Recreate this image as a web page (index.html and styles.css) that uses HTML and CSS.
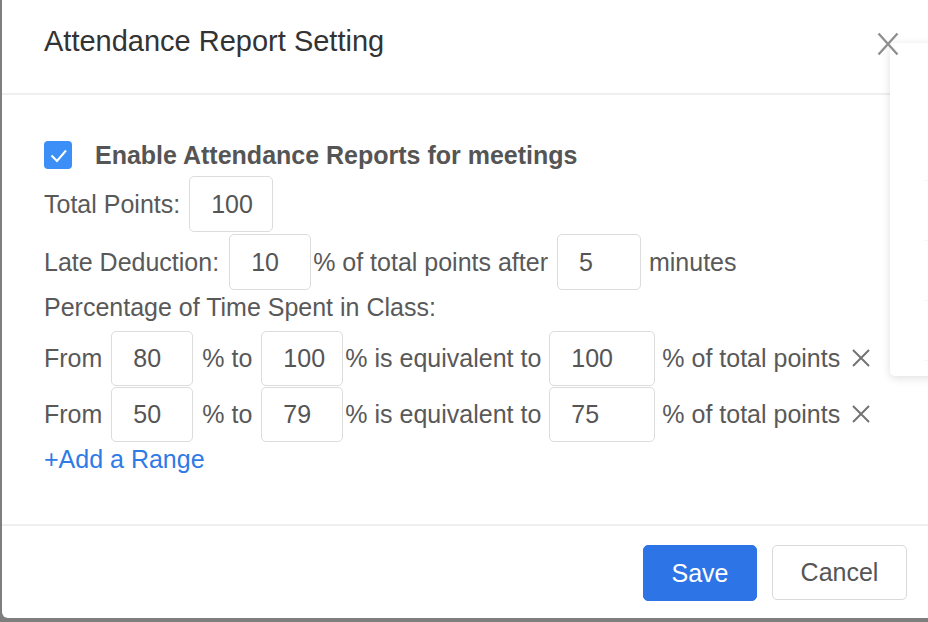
FILE: index.html
```html
<!DOCTYPE html>
<html lang="en">
<head>
<meta charset="utf-8">
<title>Attendance Report Setting</title>
<link rel="stylesheet" href="styles.css">
</head>
<body>
<div class="dialog">
  <div class="header">
    <div class="title">Attendance Report Setting</div>
    <button class="close" aria-label="Close">
      <svg width="22" height="24" viewBox="0 0 22 24"><path d="M1.5 1.5 L20.5 22.5 M20.5 1.5 L1.5 22.5" stroke="#8e8e8e" stroke-width="2.3" fill="none"/></svg>
    </button>
  </div>
  <div class="body">
    <div class="row check-row">
      <span class="checkbox"><svg width="28" height="28" viewBox="0 0 28 28"><polyline points="7.5,14.5 13,20 22,9.5" fill="none" stroke="#fff" stroke-width="2"/></svg></span>
      <span class="bold">Enable Attendance Reports for meetings</span>
    </div>
    <div class="row r-total">
      <span>Total Points:</span>
      <span class="field w84 ml9">100</span>
    </div>
    <div class="row r-late">
      <span>Late Deduction:</span>
      <span class="field w82 ml10 mr2">10</span>
      <span>% of total points after</span>
      <span class="field w84 ml9 mr8">5</span>
      <span>minutes</span>
    </div>
    <div class="row r-pct">
      <span>Percentage of Time Spent in Class:</span>
    </div>
    <div class="row r-from first">
      <span>From</span>
      <span class="field w82 ml9 mr9">80</span>
      <span>% to</span>
      <span class="field w82 ml9 mr2">100</span>
      <span>% is equivalent to</span>
      <span class="field w106 ml8 mr7">100</span>
      <span>% of total points</span>
      <svg class="del" width="18" height="18" viewBox="0 0 18 18"><path d="M1 1 L17 17 M17 1 L1 17" stroke="#737373" stroke-width="2" fill="none"/></svg>
    </div>
    <div class="row r-from">
      <span>From</span>
      <span class="field w82 ml9 mr9">50</span>
      <span>% to</span>
      <span class="field w82 ml9 mr2">79</span>
      <span>% is equivalent to</span>
      <span class="field w106 ml8 mr7">75</span>
      <span>% of total points</span>
      <svg class="del" width="18" height="18" viewBox="0 0 18 18"><path d="M1 1 L17 17 M17 1 L1 17" stroke="#737373" stroke-width="2" fill="none"/></svg>
    </div>
    <div class="row r-add"><a class="add">+Add a Range</a></div>
  </div>
  <div class="footer">
    <button class="btn primary">Save</button>
    <button class="btn">Cancel</button>
  </div>
</div>
<div class="side-panel">
  <div class="side-item"></div>
  <div class="side-item"></div>
  <div class="side-item"></div>
  <div class="side-item"></div>
</div>
</body>
</html>
```
FILE: styles.css
```css
html, body {
  margin: 0;
  padding: 0;
}
body {
  background: #7e7e7e;
  width: 928px;
  height: 622px;
  overflow: hidden;
  font-family: "Liberation Sans", Arial, Helvetica, sans-serif;
  position: relative;
}
.dialog {
  margin-left: 2px;
  width: 926px;
  height: 618px;
  background: #fff;
  border-bottom-left-radius: 6px;
  display: flex;
  flex-direction: column;
}
.header {
  height: 93px;
  border-bottom: 2px solid #efefef;
  display: flex;
  justify-content: space-between;
  align-items: flex-start;
  padding: 0 29px 0 42px;
  box-sizing: content-box;
  flex: none;
}
.title {
  margin-top: 24px;
  font-size: 29px;
  line-height: 34px;
  color: #333;
}
.close {
  position: relative;
  z-index: 3;
  margin-top: 32px;
  padding: 0;
  border: 0;
  background: transparent;
  width: 22px;
  height: 24px;
  display: block;
}
.close svg { display: block; }
.body {
  flex: 1;
  padding: 46px 0 0 42px;
  font-size: 25px;
  line-height: 28px;
  color: #595959;
}
.row {
  display: flex;
  align-items: center;
  white-space: nowrap;
}
.check-row { height: 28px; }
.checkbox {
  width: 28px;
  height: 28px;
  border-radius: 4px;
  background: #3b8ff6;
  margin-right: 23px;
  display: block;
}
.checkbox svg { display: block; }
.bold {
  font-weight: bold;
  color: #555;
}
.r-total { height: 56px; margin-top: 7px; }
.r-late { height: 56px; margin-top: 2px; }
.r-pct { height: 28px; margin-top: 3px; }
.r-from { height: 56px; }
.r-from.first { margin-top: 9px; }
.r-add { height: 28px; margin-top: 3px; }
.field {
  box-sizing: border-box;
  height: 56px;
  border: 1px solid #dcdcdc;
  border-radius: 5px;
  padding-left: 21px;
  display: flex;
  align-items: center;
  color: #555;
}
.r-from .field { height: 55px; }
.w82 { width: 82px; }
.w84 { width: 84px; }
.w106 { width: 106px; }
.ml8 { margin-left: 8px; }
.ml9 { margin-left: 9px; }
.ml10 { margin-left: 10px; }
.mr2 { margin-right: 2px; }
.mr7 { margin-right: 7px; }
.mr8 { margin-right: 8px; }
.mr9 { margin-right: 9px; }
.del {
  margin-left: 12px;
  display: block;
}
.add {
  color: #2f7be6;
  cursor: pointer;
}
.footer {
  flex: none;
  height: 94px;
  border-top: 2px solid #efefef;
  display: flex;
  justify-content: flex-end;
  align-items: flex-start;
  padding: 19px 21px 0 0;
  box-sizing: border-box;
  gap: 15px;
}
.btn {
  height: 55px;
  width: 135px;
  border: 1px solid #d9d9d9;
  border-radius: 5px;
  background: #fff;
  color: #555;
  font-family: "Liberation Sans", Arial, sans-serif;
  font-size: 25px;
  padding: 0;
}
.btn.primary {
  width: 114px;
  height: 56px;
  background: #2d74e7;
  border-color: #2d74e7;
  color: #fff;
}
.side-panel {
  position: absolute;
  left: 890px;
  top: 43px;
  width: 60px;
  height: 333px;
  background: #fff;
  border-radius: 5px;
  box-shadow: 0 2px 10px rgba(0, 0, 0, 0.13);
  z-index: 2;
  padding-top: 137px;
  box-sizing: border-box;
}
.side-item {
  height: 59px;
  border-top: 1px solid #f6f6f6;
  margin-left: 34px;
}
```
